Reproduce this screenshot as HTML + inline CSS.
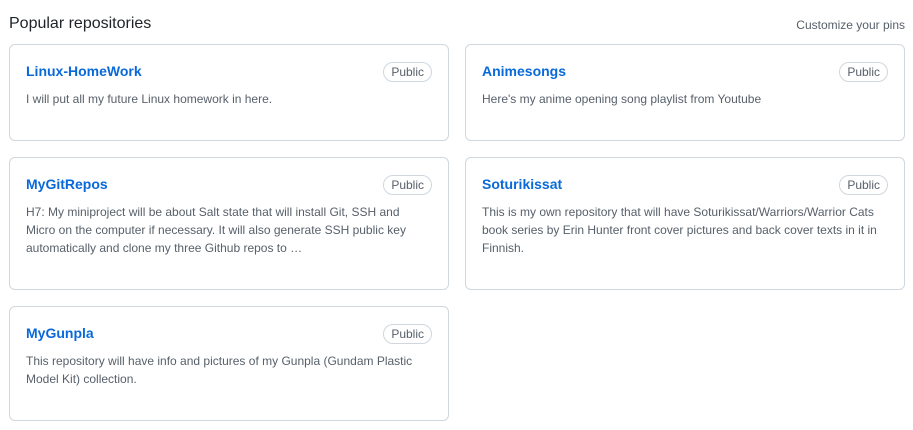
<!DOCTYPE html>
<html><head><meta charset="utf-8"><style>
body{margin:0;width:913px;height:430px;background:#fff;font-family:"Liberation Sans",Arial,sans-serif;position:relative;overflow:hidden}
.h{position:absolute;left:9px;top:15px;font-size:16px;color:#1f2328}
.c{position:absolute;right:8px;top:18px;font-size:12px;color:#57606a}
.card{position:absolute;box-sizing:border-box;width:440px;border:1px solid #d0d7de;border-radius:6px;padding:16px}
.t{font-size:14px;font-weight:bold;color:#0969da;line-height:21px;margin-top:0}
.b{position:absolute;right:16px;top:17px;font-size:12px;color:#57606a;border:1px solid #d0d7de;border-radius:2em;padding:0 7px;line-height:18px}
.d{font-size:12px;color:#57606a;line-height:18px;margin-top:8px}
</style></head><body>
<div class="h">Popular repositories</div>
<div class="c">Customize your pins</div>
<div class="card" style="left:9px;top:44px;height:97px"><div class="t">Linux-HomeWork</div><span class="b">Public</span><div class="d">I will put all my future Linux homework in here.</div></div>
<div class="card" style="left:465px;top:44px;height:97px"><div class="t">Animesongs</div><span class="b">Public</span><div class="d">Here's my anime opening song playlist from Youtube</div></div>
<div class="card" style="left:9px;top:157px;height:133px"><div class="t">MyGitRepos</div><span class="b">Public</span><div class="d">H7: My miniproject will be about Salt state that will install Git, SSH and Micro on the computer if necessary. It will also generate SSH public key automatically and clone my three Github repos to …</div></div>
<div class="card" style="left:465px;top:157px;height:133px"><div class="t">Soturikissat</div><span class="b">Public</span><div class="d">This is my own repository that will have Soturikissat/Warriors/Warrior Cats book series by Erin Hunter front cover pictures and back cover texts in it in Finnish.</div></div>
<div class="card" style="left:9px;top:306px;height:115px"><div class="t">MyGunpla</div><span class="b">Public</span><div class="d">This repository will have info and pictures of my Gunpla (Gundam Plastic Model Kit) collection.</div></div>
</body></html>
